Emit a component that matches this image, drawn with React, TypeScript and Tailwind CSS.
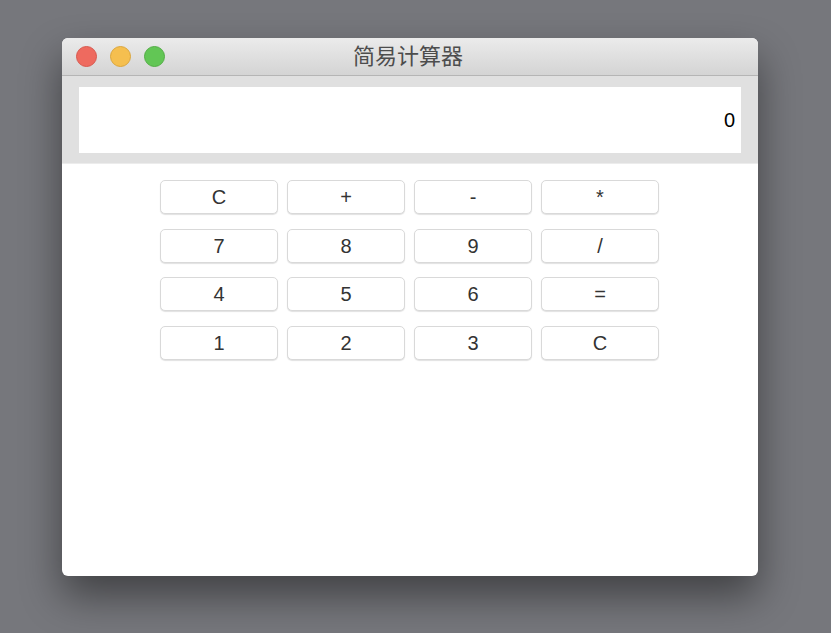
const keys = ["C", "+", "-", "*", "7", "8", "9", "/", "4", "5", "6", "=", "1", "2", "3", "C"];

export default function App() {
  return (
    <div
      className="w-[831px] h-[633px] bg-[#76777c] pl-[62px] pt-[38px] overflow-hidden"
      style={{ fontFamily: '"Liberation Sans", "Noto Sans CJK SC", sans-serif' }}
    >
      <div className="w-[696px] h-[538px] bg-white rounded-[6px] overflow-hidden flex flex-col shadow-[0_20px_40px_rgba(0,0,0,0.45)]">
        {/* Title bar */}
        <div className="relative h-[38px] flex items-center bg-gradient-to-b from-[#ebebeb] to-[#d4d4d4] border-b border-[#b5b5b5]">
          <div className="flex items-center gap-[13px] pl-[14px]">
            <span className="w-[21px] h-[21px] rounded-full bg-[#ee6a5f] border border-[#d8584e]" />
            <span className="w-[21px] h-[21px] rounded-full bg-[#f5bf4f] border border-[#dba63c]" />
            <span className="w-[21px] h-[21px] rounded-full bg-[#62c655] border border-[#52ad45]" />
          </div>
          <div className="absolute inset-0 flex items-center justify-center text-[22px] text-[#4d4d4d] pr-[4px]">
            简易计算器
          </div>
        </div>

        {/* Display */}
        <div className="bg-[#e0e0e0] pt-[11px] pb-[10px] pl-[17px] pr-[17px] border-b border-[#ececec]">
          <div className="h-[66px] bg-white flex items-center justify-end pr-[6px] text-[20px] text-black">
            0
          </div>
        </div>

        {/* Keys */}
        <div className="flex pl-[98px] pt-[16px]">
          <div className="grid grid-cols-4 gap-x-[9px] gap-y-[14.5px]">
            {keys.map((k, i) => (
              <button
                key={i}
                className="w-[118px] h-[34px] bg-white rounded-[5px] border border-[#d9d9d9] shadow-[0_1px_1px_rgba(0,0,0,0.12)] flex items-center justify-center text-[20px] text-[#333333]"
              >
                {k}
              </button>
            ))}
          </div>
        </div>
      </div>
    </div>
  );
}
